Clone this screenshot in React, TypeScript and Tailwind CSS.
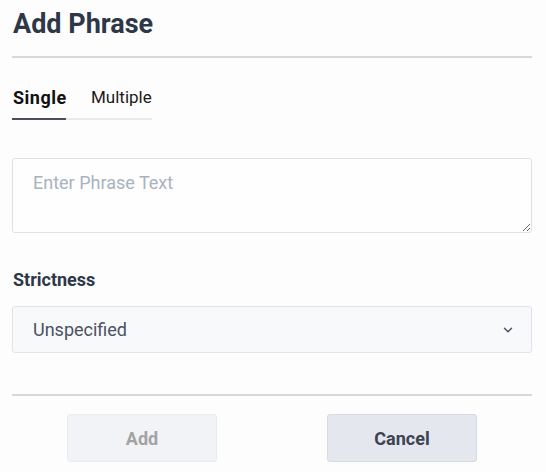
import { ChevronDown } from "lucide-react";

export default function App() {
  return (
    <div
      className="min-h-[472px] w-[546px] bg-[#fdfdfd] pl-3 pr-[14px] pt-[6px] flex flex-col"
      style={{ fontFamily: "Roboto, 'Liberation Sans', sans-serif" }}
    >
      <h2 className="text-[27px] font-bold text-[#2d3748] leading-9 pl-px">Add Phrase</h2>
      <div className="mt-[14px] h-[2px] bg-[#d8d8d8]" />

      {/* tabs */}
      <div className="mt-[26px] flex">
        <button className="w-[54px] text-left pl-px pb-[7px] text-[18px] leading-[27px] font-bold tracking-[0.5px] text-[#111] border-b-2 border-[#4b5058]">
          Single
        </button>
        <button className="w-[86px] text-left pl-[25px] pb-[7px] text-[17px] leading-[27px] text-[#1a1a1a] border-b-2 border-[#e8eaee] whitespace-nowrap">
          Multiple
        </button>
      </div>

      <textarea
        placeholder="Enter Phrase Text"
        className="mt-[38px] h-[75px] w-full rounded-[3px] border border-[#dde2e8] bg-[#fefefe] px-5 pt-[10px] pb-2 text-[18px] leading-[27px] text-[#2d3748] placeholder:text-[#a9b2bf] outline-none"
      />

      <label className="mt-[33px] pl-px text-[18px] leading-[27px] font-bold text-[#2d3748]">Strictness</label>
      <div className="mt-[13px] h-[47px] flex items-center justify-between rounded-[3px] border border-[#e0e4ea] bg-[#f8f9fb] pl-5 pr-4">
        <span className="text-[18px] text-[#4a5263]">Unspecified</span>
        <ChevronDown size={14} strokeWidth={2.5} className="text-[#4a5263]" />
      </div>

      <div className="mt-[41px] h-[2px] bg-[#d8d8d8]" />

      <div className="mt-[18px] flex justify-around">
        <button className="w-[150px] h-[48px] rounded-[3px] border border-[#eaecf0] bg-[#f2f3f6] text-[18px] font-bold text-[#a3a3a3]">
          Add
        </button>
        <button className="w-[150px] h-[48px] rounded-[3px] border border-[#d6dae1] bg-[#e4e7ee] text-[18px] font-bold text-[#3d4350]">
          Cancel
        </button>
      </div>
    </div>
  );
}
